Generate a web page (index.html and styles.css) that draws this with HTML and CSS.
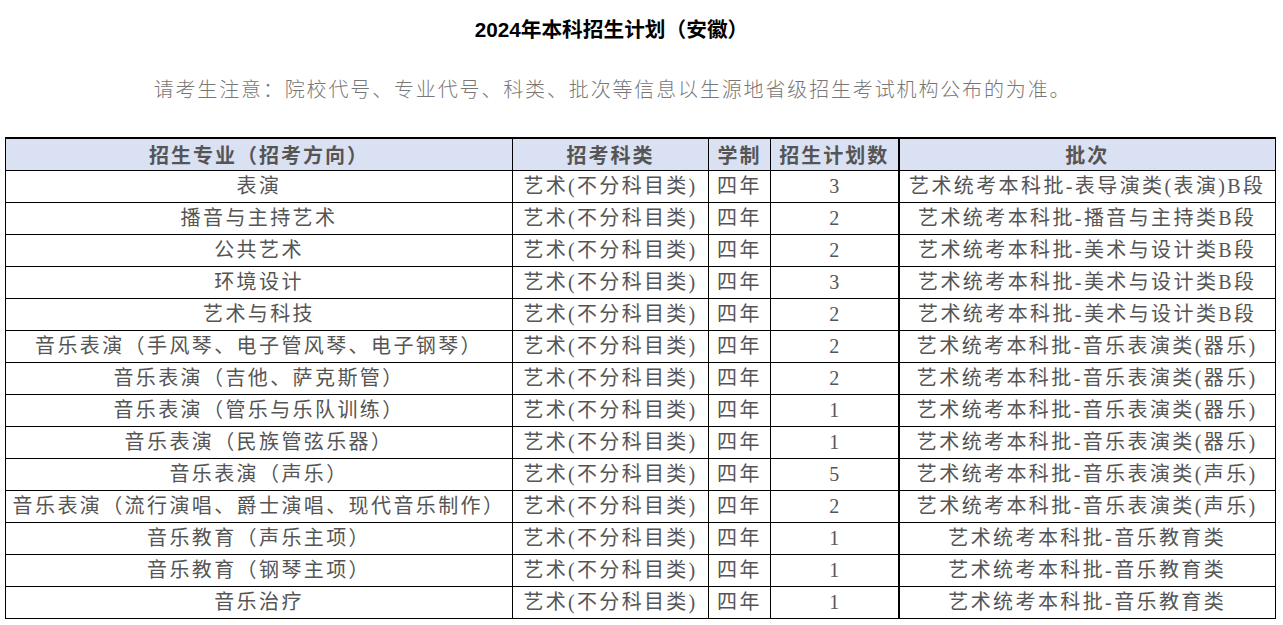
FILE: index.html
```html
<!DOCTYPE html>
<html lang="zh-CN">
<head>
<meta charset="utf-8">
<title>2024年本科招生计划（安徽）</title>
<link rel="stylesheet" href="styles.css">
</head>
<body>
<div class="page">
  <h1 class="title">2024年本科招生计划（安徽）</h1>
  <p class="notice">请考生注意：院校代号、专业代号、科类、批次等信息以生源地省级招生考试机构公布的为准。</p>
  <table class="plan">
    <colgroup>
      <col class="c1"><col class="c2"><col class="c3"><col class="c4"><col class="c5">
    </colgroup>
    <thead>
      <tr><th>招生专业（招考方向）</th><th>招考科类</th><th>学制</th><th>招生计划数</th><th class="batch">批次</th></tr>
    </thead>
    <tbody>
      <tr><td>表演</td><td class="k">艺术(不分科目类)</td><td>四年</td><td class="n">3</td><td class="batch">艺术统考本科批-表导演类(表演)B段</td></tr>
      <tr><td>播音与主持艺术</td><td class="k">艺术(不分科目类)</td><td>四年</td><td class="n">2</td><td class="batch">艺术统考本科批-播音与主持类B段</td></tr>
      <tr><td>公共艺术</td><td class="k">艺术(不分科目类)</td><td>四年</td><td class="n">2</td><td class="batch">艺术统考本科批-美术与设计类B段</td></tr>
      <tr><td>环境设计</td><td class="k">艺术(不分科目类)</td><td>四年</td><td class="n">3</td><td class="batch">艺术统考本科批-美术与设计类B段</td></tr>
      <tr><td>艺术与科技</td><td class="k">艺术(不分科目类)</td><td>四年</td><td class="n">2</td><td class="batch">艺术统考本科批-美术与设计类B段</td></tr>
      <tr><td>音乐表演（手风琴、电子管风琴、电子钢琴）</td><td class="k">艺术(不分科目类)</td><td>四年</td><td class="n">2</td><td class="batch">艺术统考本科批-音乐表演类(器乐)</td></tr>
      <tr><td>音乐表演（吉他、萨克斯管）</td><td class="k">艺术(不分科目类)</td><td>四年</td><td class="n">2</td><td class="batch">艺术统考本科批-音乐表演类(器乐)</td></tr>
      <tr><td>音乐表演（管乐与乐队训练）</td><td class="k">艺术(不分科目类)</td><td>四年</td><td class="n">1</td><td class="batch">艺术统考本科批-音乐表演类(器乐)</td></tr>
      <tr><td>音乐表演（民族管弦乐器）</td><td class="k">艺术(不分科目类)</td><td>四年</td><td class="n">1</td><td class="batch">艺术统考本科批-音乐表演类(器乐)</td></tr>
      <tr><td>音乐表演（声乐）</td><td class="k">艺术(不分科目类)</td><td>四年</td><td class="n">5</td><td class="batch">艺术统考本科批-音乐表演类(声乐)</td></tr>
      <tr><td>音乐表演（流行演唱、爵士演唱、现代音乐制作）</td><td class="k">艺术(不分科目类)</td><td>四年</td><td class="n">2</td><td class="batch">艺术统考本科批-音乐表演类(声乐)</td></tr>
      <tr><td>音乐教育（声乐主项）</td><td class="k">艺术(不分科目类)</td><td>四年</td><td class="n">1</td><td class="batch">艺术统考本科批-音乐教育类</td></tr>
      <tr><td>音乐教育（钢琴主项）</td><td class="k">艺术(不分科目类)</td><td>四年</td><td class="n">1</td><td class="batch">艺术统考本科批-音乐教育类</td></tr>
      <tr><td>音乐治疗</td><td class="k">艺术(不分科目类)</td><td>四年</td><td class="n">1</td><td class="batch">艺术统考本科批-音乐教育类</td></tr>
    </tbody>
  </table>
</div>
</body>
</html>
```
FILE: styles.css
```css
html, body {
  margin: 0;
  padding: 0;
  background: #ffffff;
}

.page {
  width: 1283px;
  font-family: "Liberation Serif", "Noto Sans CJK SC", serif;
  color: #555555;
}

.title {
  margin: 0;
  height: 60px;
  line-height: 60px;
  padding-right: 60px;
  text-align: center;
  font-family: "Liberation Sans", "Noto Sans CJK SC", sans-serif;
  font-size: 20.7px;
  font-weight: bold;
  color: #000000;
  letter-spacing: 0;
}

.notice {
  margin: 14px 0 33px 0;
  height: 30px;
  line-height: 30px;
  padding-right: 58px;
  text-align: center;
  font-family: "Noto Sans CJK SC", sans-serif;
  font-weight: 300;
  font-size: 20px;
  letter-spacing: 1.85px;
  color: #777777;
}

.plan {
  margin-left: 5px;
  width: 1270px;
  border-collapse: collapse;
  table-layout: fixed;
  border-top: 2px solid #000;
}

.c1 { width: 507px; }
.c2 { width: 196px; }
.c3 { width: 62px; }
.c4 { width: 128px; }
.c5 { width: 377px; }

.plan th,
.plan td {
  border: 1px solid #000;
  padding: 0;
  height: 31px;
  line-height: 31px;
  text-align: center;
  white-space: nowrap;
  overflow: hidden;
  font-size: 20px;
  color: #555555;
}

.plan th {
  background: #d9e1f2;
  font-family: "Noto Sans CJK SC", sans-serif;
  font-weight: bold;
  letter-spacing: 2px;
}

.plan td {
  font-family: "Liberation Serif", "Noto Sans CJK SC", serif;
  letter-spacing: 2.4px;
}

.plan td.k {
  letter-spacing: 2.3px;
}

.plan td.n {
  letter-spacing: 0;
}

.plan td.batch {
  letter-spacing: 2.4px;
}

.plan .batch {
  border-left: 2px solid #000;
}
```
